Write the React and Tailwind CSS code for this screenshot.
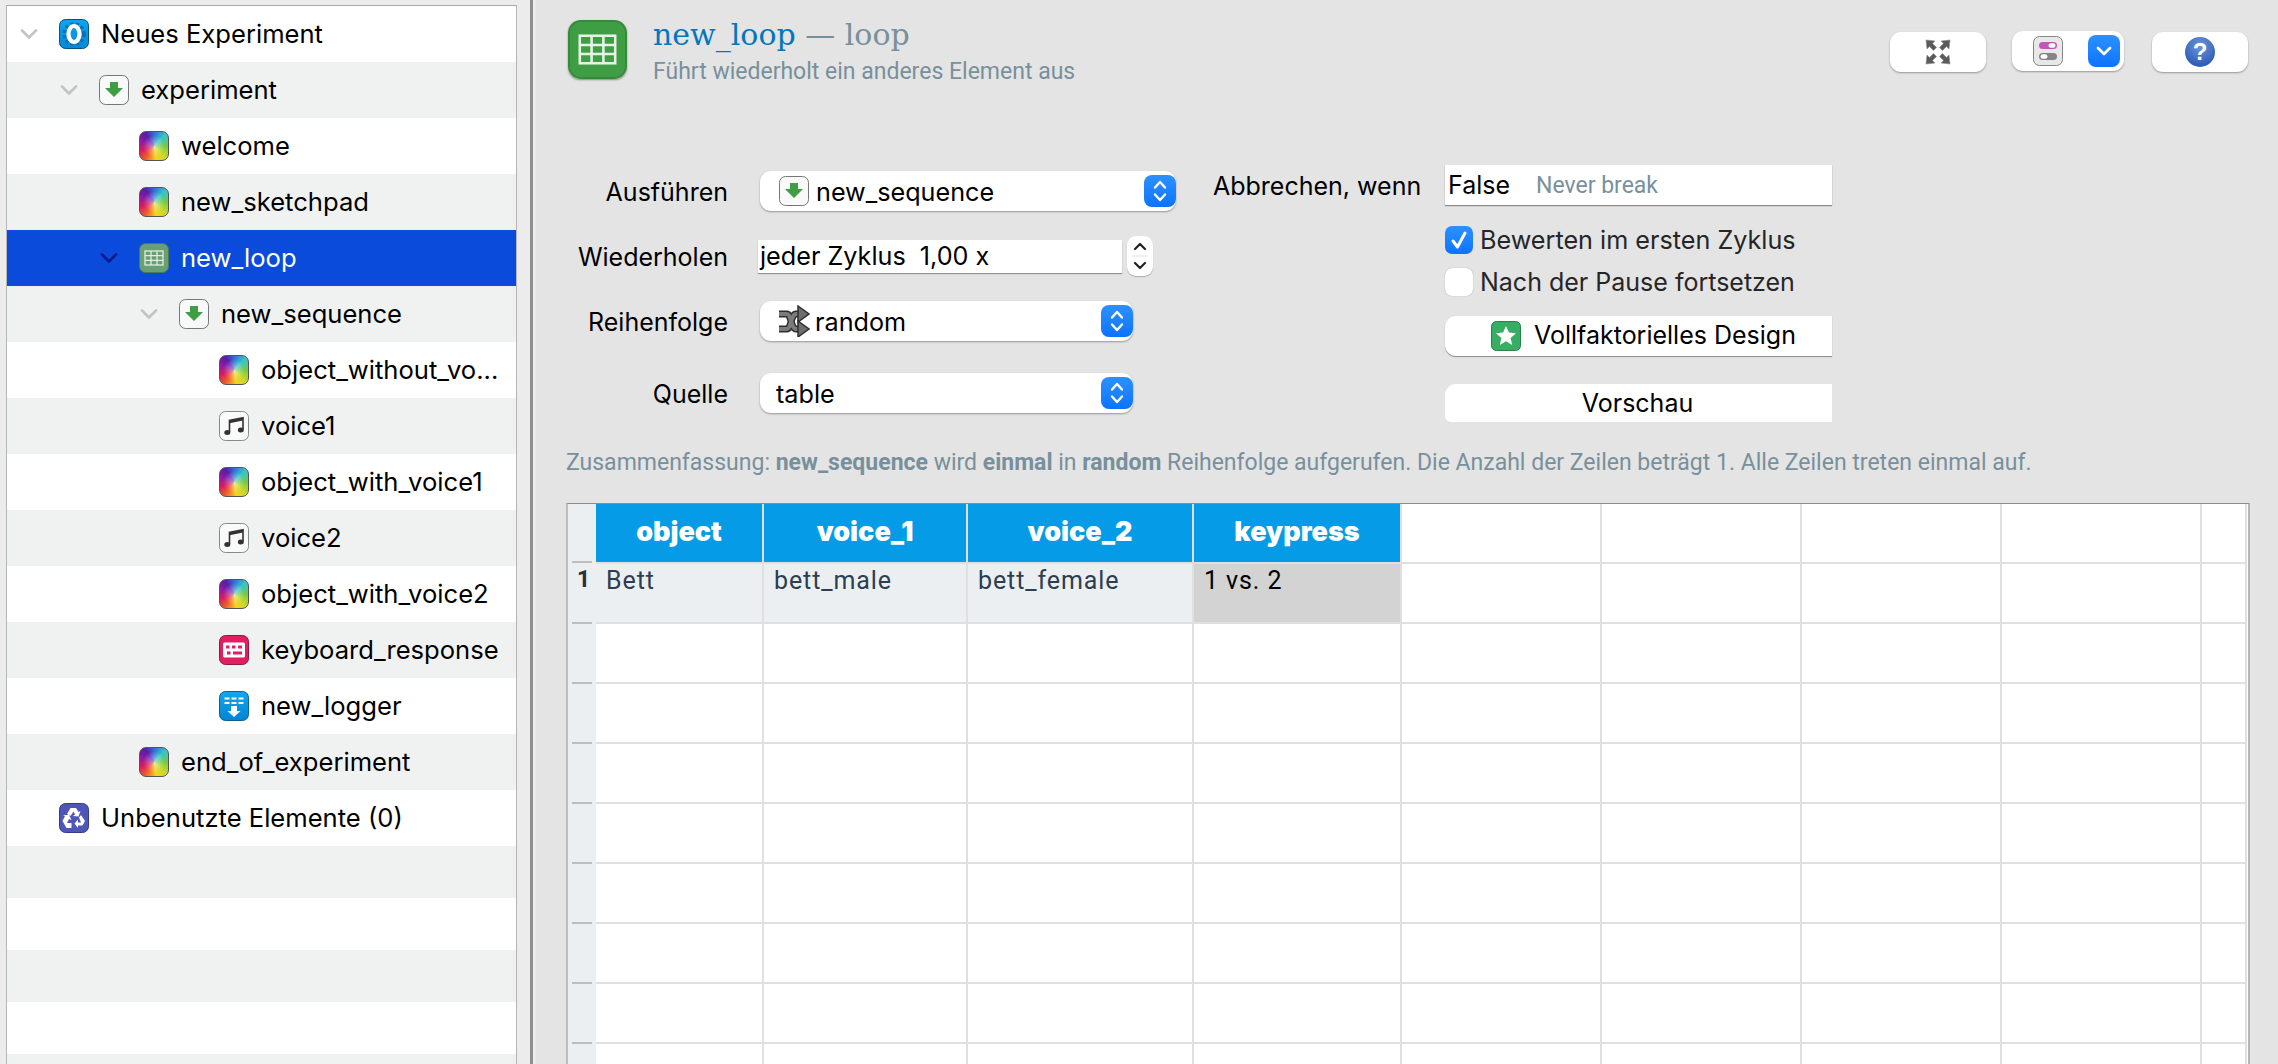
import React from "react";

const Chevron = ({ className = "text-[#c4c4c4]" }) => (
  <svg width="18" height="12" viewBox="0 0 18 12" className={className} fill="none">
    <path d="M2 2.5 L9 9.5 L16 2.5" stroke="currentColor" strokeWidth="2.6" strokeLinecap="round" strokeLinejoin="round" />
  </svg>
);

const Rainbow = () => (
  <div className="w-[30px] h-[30px] rounded-[7px] border border-[#555] bg-[radial-gradient(circle,rgba(255,255,255,0.5),rgba(255,255,255,0)_55%),conic-gradient(#2b6fd4,#35c6c9_45deg,#74c943_90deg,#c9d92c_135deg,#f6d51f_170deg,#ef5a2a_215deg,#d81b60_250deg,#8e1aa0_290deg,#5e1aa8_325deg,#2b6fd4)]" />
);

const Seq = ({ size = 30 }) => (
  <svg width={size} height={size} viewBox="0 0 30 30">
    <rect x="0.5" y="0.5" width="29" height="29" rx="6" fill="#f9f9f9" stroke="#777" />
    <path d="M11 7 H19 V13 H24 L15 22 L6 13 H11 Z" fill="#3f9e44" />
  </svg>
);

const Root = () => (
  <svg width="30" height="30" viewBox="0 0 30 30">
    <defs>
      <linearGradient id="rootg" x1="0" y1="0" x2="0" y2="1">
        <stop offset="0" stopColor="#0fa5ee" />
        <stop offset="1" stopColor="#0388d8" />
      </linearGradient>
    </defs>
    <rect x="0.5" y="0.5" width="29" height="29" rx="6" fill="url(#rootg)" stroke="#0a4f80" />
    <circle cx="15" cy="15" r="10" fill="none" stroke="#0a6eb4" strokeWidth="3.5" strokeDasharray="3 2.4" />
    <ellipse cx="15" cy="15" rx="5.5" ry="8" fill="none" stroke="#fff" strokeWidth="4.2" />
  </svg>
);

const TableIcon = ({ size = 30, bg = "#3f9e44", stroke = "#2f6d38", grid = "#dfeee0" }) => (
  <svg width={size} height={size} viewBox="0 0 30 30" className="block">
    <rect x="0.5" y="0.5" width="29" height="29" rx="6" fill={bg} stroke={stroke} />
    <rect x="6" y="8" width="18" height="14" fill="none" stroke={grid} strokeWidth="1.3" />
    <path d="M6 12.7 H24 M6 17.3 H24 M12 8 V22 M18 8 V22" stroke={grid} strokeWidth="1.3" />
  </svg>
);

const Note = () => (
  <svg width="30" height="30" viewBox="0 0 30 30">
    <rect x="0.5" y="0.5" width="29" height="29" rx="6" fill="#fafafa" stroke="#888" />
    <path d="M10.5 21 V9.5 L24 6.8 V18.5" fill="none" stroke="#333" strokeWidth="1.6" />
    <path d="M10.5 9.5 L24 6.8 V9.6 L10.5 12.2 Z" fill="#333" />
    <ellipse cx="8.3" cy="21.5" rx="3" ry="2.5" fill="#333" />
    <ellipse cx="21.8" cy="19" rx="3" ry="2.5" fill="#333" />
  </svg>
);

const Keyboard = () => (
  <svg width="30" height="30" viewBox="0 0 30 30">
    <rect x="0.5" y="0.5" width="29" height="29" rx="6" fill="#e01f63" stroke="#8d1a42" />
    <rect x="4" y="7.5" width="22" height="15" rx="1.5" fill="#fff" />
    <path d="M7 10.5 h3.5 v3 h-3.5 z M13 10.5 h3.5 v3 h-3.5 z M19 10.5 h4 v3 h-4 z M8 16.5 h3.5 v3 h-3.5 z M14 16.5 h9 v3 h-9 z" fill="#e01f63" />
  </svg>
);

const Logger = () => (
  <svg width="30" height="30" viewBox="0 0 30 30">
    <defs>
      <linearGradient id="logg" x1="0" y1="0" x2="0" y2="1">
        <stop offset="0" stopColor="#14a6ee" />
        <stop offset="1" stopColor="#0284d4" />
      </linearGradient>
    </defs>
    <rect x="0.5" y="0.5" width="29" height="29" rx="6" fill="url(#logg)" stroke="#0d5f8e" />
    <path d="M5.5 6.5 h5 v2 h-5 z M12.5 6.5 h5 v2 h-5 z M19.5 6.5 h5 v2 h-5 z M5.5 11 h5 v2 h-5 z M12.5 11 h5 v2 h-5 z M19.5 11 h5 v2 h-5 z" fill="#fff" />
    <path d="M12 15 H18 V20 H21.5 L15 26 L8.5 20 H12 Z" fill="#fff" />
  </svg>
);

const Recycle = () => (
  <svg width="30" height="30" viewBox="0 0 30 30">
    <rect x="0.5" y="0.5" width="29" height="29" rx="6" fill="#4f56b6" stroke="#363c8c" />
    <path d="M11.5 5 H17 L19.5 9 L21.5 8 L19.5 13.5 L14 13 L16 11.5 L14.5 8.5 L11.5 13 L8 11 Z" fill="#fff" />
    <path d="M22 12 L26 18 L23.5 22.5 H19 V25 L15.5 20.5 L19 16.5 V19.5 H22 L20 14.5 Z" fill="#fff" />
    <path d="M3.5 18 L6 13 L4 12 L10 12 L12.5 17 L10 16 L8 20 L12.5 20 V25 H7.5 Z" fill="#fff" />
  </svg>
);

const Shuffle = () => (
  <svg width="32" height="32" viewBox="0 0 32 32" className="block">
    <path d="M1 9 H9 C13 9 13 24 18 24 H22 M1 24 H9 C13 24 13 9 18 9 H22" fill="none" stroke="#2f2f2f" strokeWidth="7" />
    <path d="M1 9 H9 C13 9 13 24 18 24 H22 M1 24 H9 C13 24 13 9 18 9 H22" fill="none" stroke="#7b7b7b" strokeWidth="4" />
    <path d="M20 1 L31 9 L20 17 Z" fill="#6e6e6e" stroke="#2f2f2f" strokeWidth="1.5" />
    <path d="M20 16 L31 24 L20 32 Z" fill="#6e6e6e" stroke="#2f2f2f" strokeWidth="1.5" />
  </svg>
);

const Arrows = () => (
  <svg width="26" height="26" viewBox="0 0 26 26" className="block">
    <g fill="#5b5b5b" stroke="#8a8a8a" strokeWidth="0.6">
      <path d="M1 1 L10 2 L7.5 4.5 L11.5 8.5 L8.5 11.5 L4.5 7.5 L2 10 Z" />
      <path d="M25 1 L24 10 L21.5 7.5 L17.5 11.5 L14.5 8.5 L18.5 4.5 L16 2 Z" />
      <path d="M1 25 L2 16 L4.5 18.5 L8.5 14.5 L11.5 17.5 L7.5 21.5 L10 24 Z" />
      <path d="M25 25 L16 24 L18.5 21.5 L14.5 17.5 L17.5 14.5 L21.5 18.5 L24 16 Z" />
    </g>
  </svg>
);

const Toggles = () => (
  <svg width="30" height="30" viewBox="0 0 30 30" className="block">
    <rect x="0.5" y="0.5" width="29" height="29" rx="6" fill="#e8e8e8" stroke="#858585" />
    <rect x="6" y="6" width="18" height="7" rx="3.5" fill="#c554b8" />
    <rect x="15.5" y="7.2" width="7" height="4.6" rx="2.3" fill="#fff" />
    <rect x="6" y="17" width="18" height="7" rx="3.5" fill="#858585" />
    <rect x="7.5" y="18.2" width="7" height="4.6" rx="2.3" fill="#fff" />
  </svg>
);

const Stepper = () => (
  <div className="w-[32px] h-[32px] rounded-[8px] bg-gradient-to-b from-[#2d90ff] to-[#0a74ff] flex items-center justify-center">
    <svg width="18" height="26" viewBox="0 0 18 26" fill="none">
      <path d="M4 9.5 L9 4 L14 9.5 M4 16.5 L9 22 L14 16.5" stroke="#fff" strokeWidth="2.4" strokeLinecap="round" strokeLinejoin="round" />
    </svg>
  </div>
);

const treeRows = [
  { l: 0, t: "Neues Experiment", i: <Root />, c: 1 },
  { l: 1, t: "experiment", i: <Seq />, c: 1 },
  { l: 2, t: "welcome", i: <Rainbow /> },
  { l: 2, t: "new_sketchpad", i: <Rainbow /> },
  { l: 2, t: "new_loop", i: <TableIcon bg="#6a9e73" stroke="#4b7a54" />, c: 1, sel: 1 },
  { l: 3, t: "new_sequence", i: <Seq />, c: 1 },
  { l: 4, t: "object_without_vo...", i: <Rainbow /> },
  { l: 4, t: "voice1", i: <Note /> },
  { l: 4, t: "object_with_voice1", i: <Rainbow /> },
  { l: 4, t: "voice2", i: <Note /> },
  { l: 4, t: "object_with_voice2", i: <Rainbow /> },
  { l: 4, t: "keyboard_response", i: <Keyboard /> },
  { l: 4, t: "new_logger", i: <Logger /> },
  { l: 2, t: "end_of_experiment", i: <Rainbow /> },
  { l: 0, t: "Unbenutzte Elemente (0)", i: <Recycle /> },
];

const indent = ["w-[52px]", "w-[92px]", "w-[132px]", "w-[172px]", "w-[212px]"];

const TreeRow = ({ r, idx }) => (
  <div
    className={
      "h-[56px] flex items-center shrink-0 " +
      (r.sel ? "bg-[#0a4bdb] text-white " : idx % 2 ? "bg-[#f0f2f2] text-black " : "bg-white text-black ")
    }
  >
    <div className={"shrink-0 flex justify-end pr-[21px] " + indent[r.l]}>
      {r.c ? <Chevron className={r.sel ? "text-[#0a1a8c]" : "text-[#c4c4c4]"} /> : null}
    </div>
    <div className="shrink-0 w-[30px] h-[30px]">{r.i}</div>
    <div className="ml-[12px] whitespace-nowrap text-[25.6px] leading-[30px]">{r.t}</div>
  </div>
);

const Label = ({ children }) => (
  <div className="w-[162px] pt-[2px] text-right text-[25px] text-black leading-[30px] whitespace-nowrap">{children}</div>
);

const Select = ({ w, icon, text, pl }) => (
  <div className={"h-[40px] bg-white rounded-[11px] shadow-[0_1px_2px_rgba(0,0,0,0.35)] flex items-center " + w}>
    <div className={"flex items-center flex-1 " + pl}>
      {icon ? <div className="w-[37px] shrink-0">{icon}</div> : null}
      <span className="text-[25.2px] leading-[30px] pt-[2px] text-black">{text}</span>
    </div>
    <Stepper />
  </div>
);

const Btn = ({ w, children }) => (
  <div className={"h-[40px] bg-white rounded-[11px] shadow-[0_1px_2px_rgba(0,0,0,0.35)] flex items-center justify-center " + w}>
    {children}
  </div>
);

const cols = ["w-[168px]", "w-[204px]", "w-[226px]", "w-[208px]", "w-[200px]", "w-[200px]", "w-[200px]", "w-[200px]", "w-[45px]"];
const headers = ["object", "voice_1", "voice_2", "keypress"];
const row1 = ["Bett", "bett_male", "bett_female", "1 vs. 2"];

const Tick = () => <div className="w-[20px] h-[2px] bg-[#bdbdbd] ml-[4px]" />;

const TableGrid = () => (
  <div className="border-t border-t-[#8c8c8c] border-l-2 border-l-[#bdbdbd] border-r-2 border-r-[#b5b5b5] w-[1684px] flex-1 overflow-hidden bg-white flex flex-col">
    <div className="flex shrink-0 h-[60px]">
      <div className="w-[28px] bg-[#eceff1] flex flex-col justify-end shrink-0">
        <div className="mb-[1px]"><Tick /></div>
      </div>
      {cols.map((c, i) => (
        <div
          key={i}
          className={
            "border-r-2 border-b-2 border-[#e0e0e0] flex items-center justify-center pb-[2px] shrink-0 font-['Inter'] font-black text-[27px] text-white " +
            c + (i < 4 ? " bg-[#059be6]" : " bg-white") + (i === 8 ? " border-r-0" : "")
          }
        >
          {headers[i]}
        </div>
      ))}
    </div>
    {Array.from({ length: 9 }).map((_, r) => (
      <div key={r} className="flex shrink-0 h-[60px]">
        <div className="w-[28px] bg-[#eceff1] flex flex-col shrink-0">
          <div className="h-[58px] font-['Roboto'] font-bold text-[23px] leading-[32px] text-[#263238] text-center pl-[3px]">{r === 0 ? "1" : ""}</div>
          <Tick />
        </div>
        {cols.map((c, i) => (
          <div
            key={i}
            className={
              "border-r-2 border-b-2 border-[#e0e0e0] shrink-0 px-[10px] font-['Roboto'] text-[25px] tracking-[0.9px] leading-[34px] whitespace-nowrap " +
              c +
              (r === 0 && i < 3 ? " bg-[#eceff1] text-[#2c3e50]" : r === 0 && i === 3 ? " bg-[#d3d3d3] text-black" : " bg-white") +
              (i === 8 ? " border-r-0" : "")
            }
          >
            {r === 0 && i < 4 ? row1[i] : ""}
          </div>
        ))}
      </div>
    ))}
  </div>
);

export default function App() {
  return (
    <div className="w-[2278px] h-[1064px] overflow-hidden flex bg-[#e4e4e4] font-['Inter','Liberation_Sans',sans-serif]">
      <div className="w-[530px] h-full bg-[#ececec] pt-[5px] pl-[6px] pr-[13px] shrink-0 flex">
        <div className="flex-1 bg-white border border-b-0 border-[#b5b5b5] border-t-[#a8a8a8] flex flex-col overflow-hidden">
          {treeRows.map((r, i) => <TreeRow key={i} r={r} idx={i} />)}
          {[1, 0, 1, 0, 1].map((g, i) => (
            <div key={i} className={"h-[52px] shrink-0 " + (g ? "bg-[#f0f2f2]" : "bg-white")} />
          ))}
        </div>
      </div>
      <div className="w-[3px] bg-[#8f8f8f] shrink-0" />
      <div className="w-[3px] bg-[#ececec] shrink-0" />
      <div className="flex-1 min-w-0 pl-[30px] pr-[30px] flex flex-col h-full">
        <div className="h-[165px] shrink-0 flex items-start">
          <div className="ml-[2px] mt-[20px] rounded-[12px] shadow-[0_1px_2px_rgba(0,0,0,0.4)]">
            <TableIcon size={59} bg="#3f9e44" stroke="#368a3b" grid="#e8f3e8" />
          </div>
          <div className="ml-[26px] mt-[17px]">
            <div className="font-['DejaVu_Serif'] text-[30px] leading-[36px] whitespace-nowrap text-[#78909c]">
              <span className="text-[#0277bd]">new_loop</span> — loop
            </div>
            <div className="font-['Roboto'] text-[23px] leading-[32px] mt-[3px] text-[#78909c] whitespace-nowrap">Führt wiederholt ein anderes Element aus</div>
          </div>
          <div className="ml-auto mt-[31px] flex items-start">
            <div className="mt-[1px]">
              <Btn w="w-[96px]"><Arrows /></Btn>
            </div>
            <div className="ml-[26px] w-[112px] h-[40px] bg-white rounded-[11px] shadow-[0_1px_2px_rgba(0,0,0,0.35)] flex items-center pl-[21px]">
              <Toggles />
              <div className="ml-[25px] w-[32px] h-[32px] rounded-[8px] bg-gradient-to-b from-[#2d90ff] to-[#0a74ff] flex items-center justify-center">
                <svg width="16" height="12" viewBox="0 0 16 12" fill="none"><path d="M2 3 L8 9 L14 3" stroke="#fff" strokeWidth="2.8" strokeLinecap="round" strokeLinejoin="round" /></svg>
              </div>
            </div>
            <div className="ml-[28px] mt-[1px]">
              <Btn w="w-[96px]">
                <div className="w-[30px] h-[30px] rounded-full bg-[radial-gradient(circle_at_50%_30%,#6b96de,#2f5db4_75%)] flex items-center justify-center text-white font-['Liberation_Sans'] font-bold text-[24px] leading-[30px]">?</div>
              </Btn>
            </div>
          </div>
        </div>

        <div className="flex shrink-0 h-[257px]">
          <div className="w-[610px] pt-[6px] flex flex-col shrink-0">
            <div className="flex items-center">
              <Label>Ausführen</Label>
              <div className="ml-[32px]">
                <Select w="w-[416px]" pl="pl-[19px]" icon={<Seq />} text="new_sequence" />
              </div>
            </div>
            <div className="flex items-center mt-[25px] h-[40px]">
              <Label>Wiederholen</Label>
              <div className="ml-[30px] w-[364px] h-[33px] bg-white shadow-[0_1px_1px_rgba(0,0,0,0.35)] flex items-center pl-[2px] pt-[2px] text-[25.2px] text-black whitespace-pre">jeder Zyklus  1,00 x</div>
              <div className="ml-[5px] w-[26px] h-[40px] bg-white rounded-[9px] shadow-[0_1px_1px_rgba(0,0,0,0.25)] flex flex-col items-center justify-center">
                <svg width="16" height="34" viewBox="0 0 16 34" fill="none"><path d="M3 10 L8 5 L13 10 M3 24 L8 29 L13 24" stroke="#222" strokeWidth="2.2" strokeLinecap="round" strokeLinejoin="round" /><path d="M0 17 H16" stroke="#e2e2e2" /></svg>
              </div>
            </div>
            <div className="flex items-center mt-[25px]">
              <Label>Reihenfolge</Label>
              <div className="ml-[32px]">
                <Select w="w-[373px]" pl="pl-[18px]" icon={<Shuffle />} text="random" />
              </div>
            </div>
            <div className="flex items-center mt-[32px]">
              <Label>Quelle</Label>
              <div className="ml-[32px]">
                <Select w="w-[373px]" pl="pl-[16px]" text="table" />
              </div>
            </div>
          </div>
          <div className="ml-[37px] flex flex-col w-[619px] shrink-0">
            <div className="flex items-center">
              <div className="w-[206px] pt-[2px] text-[25px] leading-[30px] text-black whitespace-nowrap">Abbrechen, wenn</div>
              <div className="ml-[26px] w-[387px] h-[40px] bg-white shadow-[0_1px_1px_rgba(0,0,0,0.4)] flex items-center pl-[3px] pt-[2px]">
                <span className="text-[25px] text-black">False</span>
                <span className="ml-[26px] font-['Roboto'] text-[23px] text-[#78909c]">Never break</span>
              </div>
            </div>
            <div className="pl-[232px] flex flex-col">
              <div className="flex items-center mt-[21px] h-[28px]">
                <div className="w-[28px] h-[28px] rounded-[7px] bg-gradient-to-b from-[#2d90ff] to-[#0a74ff] flex items-center justify-center">
                  <svg width="18" height="20" viewBox="0 0 18 20" fill="none"><path d="M3 11 L7.5 17 L15 3" stroke="#fff" strokeWidth="3" strokeLinecap="round" strokeLinejoin="round" /></svg>
                </div>
                <span className="ml-[7px] pt-[2px] text-[25.2px] text-[#262626] whitespace-nowrap">Bewerten im ersten Zyklus</span>
              </div>
              <div className="flex items-center mt-[14px] h-[28px]">
                <div className="w-[28px] h-[28px] rounded-[7px] bg-white shadow-[0_0_1px_rgba(0,0,0,0.4)]" />
                <span className="ml-[7px] pt-[2px] text-[25px] text-[#262626] whitespace-nowrap">Nach der Pause fortsetzen</span>
              </div>
              <div className="mt-[20px] w-[387px] h-[40px] bg-white rounded-l-[11px] shadow-[0_1px_1px_rgba(0,0,0,0.4)] flex items-center pl-[46px]">
                <svg width="30" height="30" viewBox="0 0 30 30" className="block">
                  <rect x="0.5" y="0.5" width="29" height="29" rx="5" fill="#38ae65" stroke="#2b7f4b" />
                  <path d="M15 5 L17.9 11.6 L25 12.3 L19.6 17 L21.2 24 L15 20.3 L8.8 24 L10.4 17 L5 12.3 L12.1 11.6 Z" fill="#fff" />
                </svg>
                <span className="ml-[13px] text-[25px] text-black whitespace-nowrap">Vollfaktorielles Design</span>
              </div>
              <div className="mt-[28px] w-[387px] h-[38px] pt-[2px] pr-[2px] bg-white rounded-tl-[11px] rounded-bl-[6px] flex items-center justify-center text-[25px] text-black">Vorschau</div>
            </div>
          </div>
        </div>

        <div className="shrink-0 mt-[26px] h-[30px] mb-[25px] font-['Roboto'] text-[23px] leading-[30px] text-[#78909c] whitespace-nowrap">
          Zusammenfassung: <b>new_sequence</b> wird <b>einmal</b> in <b>random</b> Reihenfolge aufgerufen. Die Anzahl der Zeilen beträgt 1. Alle Zeilen treten einmal auf.
        </div>
        <TableGrid />
      </div>
    </div>
  );
}
